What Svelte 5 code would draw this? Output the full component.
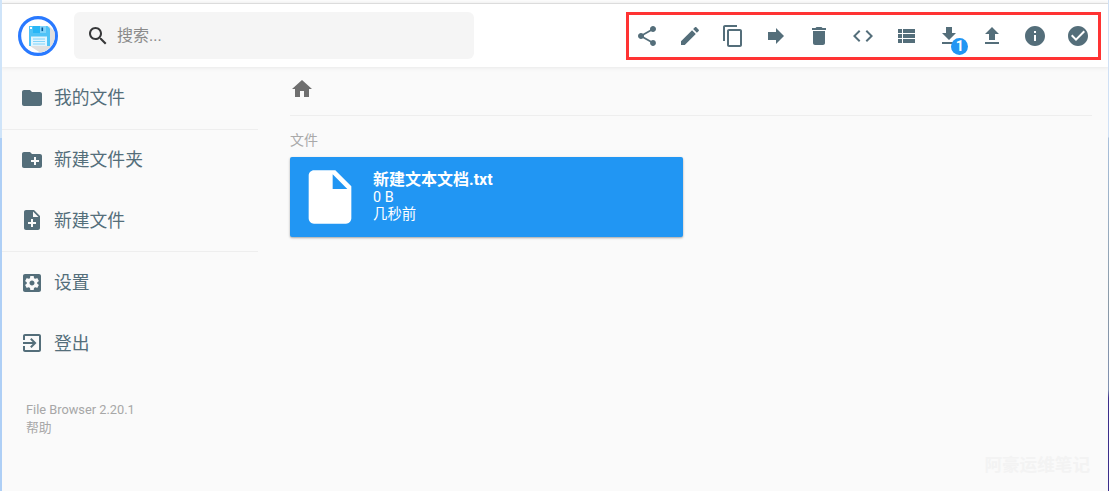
<script>
  const tools = [
    { d: 'M18 16.08c-.76 0-1.44.3-1.96.77L8.91 12.7c.05-.23.09-.46.09-.7s-.04-.47-.09-.7l7.05-4.11c.54.5 1.25.81 2.04.81 1.66 0 3-1.34 3-3s-1.34-3-3-3-3 1.34-3 3c0 .24.04.47.09.7L8.04 9.81C7.5 9.31 6.79 9 6 9c-1.66 0-3 1.34-3 3s1.34 3 3 3c.79 0 1.5-.31 2.04-.81l7.12 4.16c-.05.21-.08.43-.08.65 0 1.61 1.31 2.92 2.92 2.92s2.92-1.31 2.92-2.92-1.31-2.92-2.92-2.92z' },
    { d: 'M3 17.25V21h3.75L17.81 9.94l-3.75-3.75L3 17.25zM20.71 7.04c.39-.39.39-1.02 0-1.41l-2.34-2.34c-.39-.39-1.02-.39-1.41 0l-1.83 1.83 3.75 3.75 1.83-1.83z' },
    { d: 'M16 1H4c-1.1 0-2 .9-2 2v14h2V3h12V1zm3 4H8c-1.1 0-2 .9-2 2v14c0 1.1.9 2 2 2h11c1.1 0 2-.9 2-2V7c0-1.1-.9-2-2-2zm0 16H8V7h11v14z' },
    { d: 'M12 8V4l8 8-8 8v-4H4V8z' },
    { d: 'M6 19c0 1.1.9 2 2 2h8c1.1 0 2-.9 2-2V7H6v12zM19 4h-3.5l-1-1h-5l-1 1H5v2h14V4z' },
    { d: 'M9.4 16.6L4.8 12l4.6-4.6L8 6l-6 6 6 6 1.4-1.4zm5.2 0l4.6-4.6-4.6-4.6L16 6l6 6-6 6-1.4-1.4z' },
    { d: 'M4 14h4v-4H4v4zm0 5h4v-4H4v4zM4 9h4V5H4v4zm5 5h12v-4H9v4zm0 5h12v-4H9v4zM9 5v4h12V5H9z' },
    { d: 'M19 9h-4V3H9v6H5l7 7 7-7zM5 18v2h14v-2H5z', badge: '1' },
    { d: 'M9 16h6v-6h4l-7-7-7 7h4zm-4 2h14v2H5z' },
    { d: 'M12 2C6.48 2 2 6.48 2 12s4.48 10 10 10 10-4.48 10-10S17.52 2 12 2zm1 15h-2v-6h2v6zm0-8h-2V7h2v2z' },
    { d: 'M12 2C6.48 2 2 6.48 2 12s4.48 10 10 10 10-4.48 10-10S17.52 2 12 2zm-2 15l-5-5 1.41-1.41L10 14.17l7.59-7.59L19 8l-9 9z' }
  ];
  const folder = 'M10 4H4c-1.1 0-1.99.9-1.99 2L2 18c0 1.1.9 2 2 2h16c1.1 0 2-.9 2-2V8c0-1.1-.9-2-2-2h-8l-2-2z';
  const newFolder = 'M20 6h-8l-2-2H4c-1.11 0-1.99.89-1.99 2L2 18c0 1.11.89 2 2 2h16c1.11 0 2-.89 2-2V8c0-1.11-.89-2-2-2zm-1 8h-3v3h-2v-3h-3v-2h3V9h2v3h3v2z';
  const newFile = 'M14 2H6c-1.1 0-1.99.9-1.99 2L4 20c0 1.1.89 2 1.99 2H18c1.1 0 2-.9 2-2V8l-6-6zm2 14h-3v3h-2v-3H8v-2h3v-3h2v3h3v2zm-3-7V3.5L18.5 9H13z';
  const settings = 'M19 3H5c-1.11 0-2 .9-2 2v14c0 1.1.89 2 2 2h14c1.11 0 2-.9 2-2V5c0-1.1-.89-2-2-2zm-1.75 9c0 .23-.02.46-.05.68l1.48 1.16c.13.11.17.3.08.45l-1.4 2.42c-.09.15-.27.21-.43.15l-1.74-.7c-.36.28-.76.51-1.18.69l-.26 1.85c-.03.17-.18.3-.35.3h-2.8c-.17 0-.32-.13-.35-.29l-.26-1.85c-.43-.18-.82-.41-1.18-.69l-1.74.7c-.16.06-.34 0-.43-.15l-1.4-2.42c-.09-.15-.05-.34.08-.45l1.48-1.16c-.03-.23-.05-.46-.05-.69 0-.23.02-.46.05-.68l-1.48-1.16c-.13-.11-.17-.3-.08-.45l1.4-2.42c.09-.15.27-.21.43-.15l1.74.7c.36-.28.76-.51 1.18-.69l.26-1.85c.03-.17.18-.3.35-.3h2.8c.17 0 .32.13.35.29l.26 1.85c.43.18.82.41 1.18.69l1.74-.7c.16-.06.34 0 .43.15l1.4 2.42c.09.15.05.34-.08.45l-1.48 1.16c.03.23.05.46.05.69zM12 9.5c-1.38 0-2.5 1.12-2.5 2.5s1.12 2.5 2.5 2.5 2.5-1.12 2.5-2.5-1.12-2.5-2.5-2.5z';
  const logout = 'M10.09 15.59L11.5 17l5-5-5-5-1.41 1.41L12.67 11H3v2h9.67l-2.58 2.59zM19 3H5c-1.11 0-2 .9-2 2v4h2V5h14v14H5v-4H3v4c0 1.1.89 2 2 2h14c1.1 0 2-.9 2-2V5c0-1.1-.9-2-2-2z';
  const home = 'M10 20v-6h4v6h5v-8h3L12 3 2 12h3v8z';
  const search = 'M15.5 14h-.79l-.28-.27C15.41 12.59 16 11.11 16 9.5 16 5.91 13.09 3 9.5 3S3 5.91 3 9.5 5.91 16 9.5 16c1.61 0 3.09-.59 4.23-1.57l.27.28v.79l5 4.99L20.49 19l-4.99-5zm-6 0C7.01 14 5 11.99 5 9.5S7.01 5 9.5 5 14 7.01 14 9.5 11.99 14 9.5 14z';
  const file = 'M6 2c-1.1 0-1.99.9-1.99 2L4 20c0 1.1.89 2 1.99 2H18c1.1 0 2-.9 2-2V8l-6-6H6zm7 7V3.5L18.5 9H13z';
</script>

<div class="page">
  <header>
    <div class="logo">
      <svg viewBox="0 0 40 40" width="40" height="40" aria-hidden="true">
        <circle cx="20" cy="20" r="18.4" fill="#fff" stroke="#2979ff" stroke-width="3.2" />
        <path d="M31 10 L36.5 15.5 A17 17 0 0 1 22 36.5 L12 30z" fill="#e0e0e0" />
        <path d="M11 10h18.5l2.5 2.5V30H11z" fill="#4fc3f7" />
        <rect x="15" y="10" width="13" height="7" fill="#81d4fa" />
        <rect x="15" y="10" width="7" height="7" fill="#29b6f6" />
        <rect x="23.5" y="11.5" width="1.6" height="3.6" fill="#01579b" />
        <rect x="12" y="11" width="2" height="2" fill="#fff" />
        <rect x="13" y="20.5" width="16" height="9.5" fill="#e1f5fe" />
        <path d="M15 23h12M15 25.5h12M15 28h12" stroke="#81d4fa" stroke-width="1" />
      </svg>
    </div>
    <div class="search">
      <svg class="search-icon" viewBox="0 0 24 24" aria-hidden="true"><path d={search} /></svg>
      <span>搜索...</span>
    </div>
    <div class="toolbar">
      {#each tools as t}
        <div class="tool">
          <svg viewBox="0 0 24 24" aria-hidden="true"><path d={t.d} /></svg>
          {#if t.badge}<span class="badge">{t.badge}</span>{/if}
        </div>
      {/each}
    </div>
  </header>

  <div class="body">
    <nav>
      <div class="item first"><svg viewBox="0 0 24 24" aria-hidden="true"><path d={folder} /></svg><span>我的文件</span></div>
      <div class="ruled">
        <div class="item"><svg viewBox="0 0 24 24" aria-hidden="true"><path d={newFolder} /></svg><span>新建文件夹</span></div>
        <div class="item"><svg viewBox="0 0 24 24" aria-hidden="true"><path d={newFile} /></svg><span>新建文件</span></div>
      </div>
      <div class="ruled lower">
        <div class="item"><svg viewBox="0 0 24 24" aria-hidden="true"><path d={settings} /></svg><span>设置</span></div>
        <div class="item"><svg viewBox="0 0 24 24" aria-hidden="true"><path d={logout} /></svg><span>登出</span></div>
      </div>
      <p class="credits">File Browser 2.20.1<br />帮助</p>
    </nav>

    <main>
      <div class="crumbs">
        <svg viewBox="0 0 24 24" aria-hidden="true"><path d={home} /></svg>
      </div>
      <h2>文件</h2>
      <div class="card">
        <svg viewBox="0 0 24 24" aria-hidden="true"><path d={file} /></svg>
        <div class="meta">
          <strong>新建文本文档.txt</strong>
          <span>0 B</span>
          <span>几秒前</span>
        </div>
      </div>
    </main>
  </div>
  <div class="watermark">阿豪运维笔记</div>
  <div class="edge-left"></div>
  <div class="edge-right"></div>
</div>

<style>
  :global(body) {
    margin: 0;
    background: #fafafa;
  }
  .page {
    position: relative;
    width: 1109px;
    height: 491px;
    overflow: hidden;
    padding-top: 3px;
    box-sizing: border-box;
    background: #fafafa;
    font-family: Roboto, "Noto Sans CJK SC", sans-serif;
  }
  .page::before {
    content: "";
    position: absolute;
    inset: 0 0 auto 0;
    height: 3px;
    background: #fff;
  }
  .edge-left {
    position: absolute;
    left: 0;
    top: 0;
    bottom: 0;
    width: 2px;
    z-index: 2;
    background: linear-gradient(#cfe4f9 0 138px, #aecff6 138px);
  }
  .edge-right {
    position: absolute;
    right: 0;
    top: 0;
    bottom: 0;
    width: 1px;
    z-index: 2;
    background: linear-gradient(#cfe0f5 0 137px, #a8c0dc 138px, #8a9aa8 303px, #7f8fb0 390px, #3b2e8c 398px);
  }
  header {
    height: 63px;
    border-top: 1px solid #dcdcdc;
    background: #fff;
    box-shadow: 0 0 5px rgba(0, 0, 0, 0.1);
    display: flex;
    align-items: center;
    position: relative;
    z-index: 1;
  }
  .logo {
    width: 40px;
    height: 40px;
    margin-left: 18px;
    flex: none;
  }
  .search {
    margin-left: 16px;
    width: 400px;
    height: 47px;
    background: #f5f5f5;
    border-radius: 6px;
    display: flex;
    align-items: center;
    box-sizing: border-box;
    padding-left: 12px;
    color: #8a8a8a;
    font-size: 16px;
  }
  .search span {
    margin-top: -4px;
  }
  .search-icon {
    width: 24px;
    height: 24px;
    fill: #37383a;
    margin-right: 7px;
  }
  .toolbar {
    margin-left: auto;
    margin-right: 8px;
    margin-top: 1px;
    width: 475px;
    height: 48px;
    box-sizing: border-box;
    border: 3px solid #f33;
    padding-right: 2px;
    display: flex;
    align-items: center;
    justify-content: center;
  }
  .tool {
    position: relative;
    width: 43.2px;
    height: 24px;
    flex: none;
    display: flex;
    justify-content: center;
  }
  .tool svg {
    width: 24px;
    height: 24px;
    fill: #546e7a;
  }
  .badge {
    position: absolute;
    left: 24px;
    top: 14px;
    width: 17px;
    height: 17px;
    border-radius: 50%;
    background: #2196f3;
    color: #fff;
    font-size: 14px;
    font-weight: 700;
    line-height: 17px;
    text-align: center;
  }
  .body {
    display: flex;
  }
  nav {
    width: 258px;
    flex: none;
    padding-left: 2px;
    box-sizing: border-box;
  }
  .item {
    height: 60.5px;
    display: flex;
    align-items: center;
    color: #546e7a;
    font-size: 17.8px;
    padding-left: 18px;
  }
  .item.first {
    height: 61.5px;
  }
  .item span {
    margin-top: -3px;
  }
  .item svg {
    width: 24px;
    height: 24px;
    fill: #546e7a;
    margin-right: 10px;
    flex: none;
  }
  .ruled {
    border-top: 1px solid #eeeeee;
  }
  .lower {
    padding-top: 1px;
  }
  .credits {
    margin: 27px 0 0 24px;
    color: #a7a7a7;
    font-size: 12.8px;
    line-height: 18px;
  }
  main {
    flex: 1;
    padding: 0 17px 0 32px;
  }
  .crumbs {
    height: 49px;
    padding-top: 10px;
    box-sizing: border-box;
    border-bottom: 1px solid #eeeeee;
  }
  .crumbs svg {
    display: block;
    width: 24px;
    height: 24px;
    fill: #6f6f6f;
  }
  h2 {
    margin: 15px 0 0;
    height: 26px;
    color: #a9a9a9;
    font-size: 14px;
    font-weight: 400;
    line-height: 18px;
  }
  .card {
    width: 393px;
    height: 80px;
    background: #2196f3;
    border-radius: 2px;
    box-shadow: 0 1px 3px rgba(0, 0, 0, 0.12), 0 1px 2px rgba(0, 0, 0, 0.24);
    display: flex;
    align-items: center;
    color: #fff;
  }
  .card svg {
    width: 64px;
    height: 64px;
    fill: #fff;
    margin-left: 8px;
    flex: none;
  }
  .meta {
    display: flex;
    flex-direction: column;
    margin-left: 11px;
    margin-top: -2px;
    font-size: 14.4px;
    line-height: 17px;
  }
  .meta strong {
    font-size: 16px;
    font-weight: 700;
    line-height: 19px;
  }
  .watermark {
    position: absolute;
    right: 19px;
    top: 451px;
    color: #f3f3f3;
    font-size: 17.6px;
    font-weight: 700;
  }
</style>
